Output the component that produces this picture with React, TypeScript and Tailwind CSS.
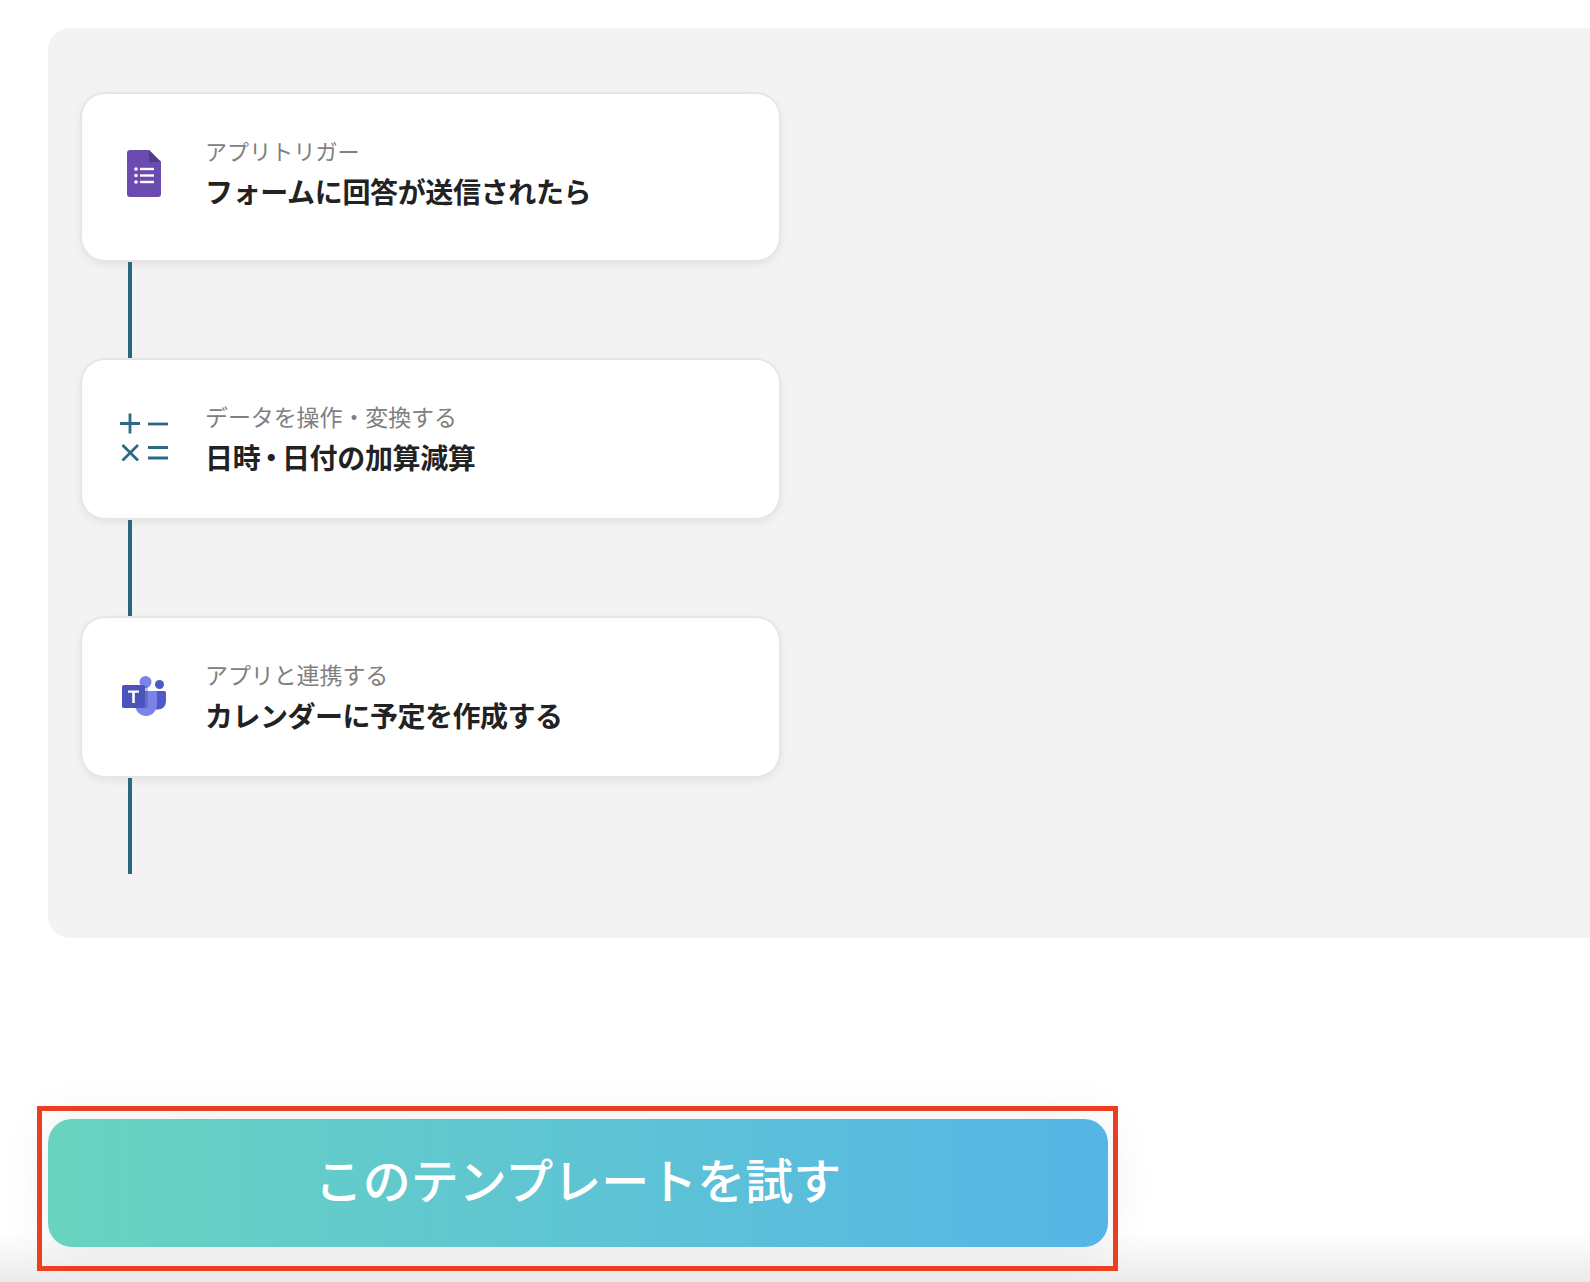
import React from 'react';

const FONT = "font-['Noto_Sans_CJK_JP','Noto_Sans',sans-serif]";

function FormsIcon() {
  return (
    <svg width="34" height="47" viewBox="0 0 34 47" aria-hidden="true">
      <path d="M3 0h19l12 12v32a3 3 0 0 1-3 3H3a3 3 0 0 1-3-3V3a3 3 0 0 1 3-3z" fill="#6c4bb0" />
      <path d="M22 0l12 12H22z" fill="#523a8f" />
      <circle cx="9" cy="19" r="1.8" fill="#fff" />
      <circle cx="9" cy="25.5" r="1.8" fill="#fff" />
      <circle cx="9" cy="32" r="1.8" fill="#fff" />
      <rect x="13" y="17.8" width="14" height="2.4" fill="#fff" />
      <rect x="13" y="24.3" width="14" height="2.4" fill="#fff" />
      <rect x="13" y="30.8" width="14" height="2.4" fill="#fff" />
    </svg>
  );
}

function MathIcon() {
  return (
    <svg width="48" height="48" viewBox="0 0 48 48" fill="none" stroke="#2b6a85" strokeWidth="2.8" className="-mt-[4px]" aria-hidden="true">
      <path d="M0 10.5h20M10 0.5v20" />
      <path d="M28 11h20" />
      <path d="M2.5 32l15.500 15.500M18 32L2.500 47.500" />
      <path d="M28 34.500h20M28 45h20" />
    </svg>
  );
}

function TeamsIcon() {
  return (
    <svg width="44" height="40" viewBox="0 0 44 40" className="-mt-[2px]" aria-hidden="true">
      <circle cx="37.500" cy="8.500" r="4.500" fill="#5059c9" />
      <path d="M30 15h12.500a1.500 1.500 0 0 1 1.500 1.500v9a8 8 0 0 1-8 8h-6z" fill="#5059c9" />
      <circle cx="23.500" cy="6" r="6" fill="#7b83eb" />
      <path d="M14 15h19a2 2 0 0 1 2 2v11.500a11 11 0 0 1-11 11.500 11.500 11.500 0 0 1-11-11.500V16z" fill="#7b83eb" />
      <path d="M13 10h11a2 2 0 0 1 2 2v18a2 2 0 0 1-2 2h-9z" fill="#3f4594" opacity="0.35" />
      <rect x="0" y="9" width="23" height="23" rx="1.800" fill="#4b53bc" />
      <path d="M6 14.500h11v2.200h-4.200V27h-2.600V16.700H6z" fill="#fff" />
    </svg>
  );
}

function FlowCard({ label, title, icon, className, labelClass }: { label: string; title: React.ReactNode; icon: React.ReactNode; className: string; labelClass: string }) {
  return (
    <div className={`flex w-[699px] items-center rounded-[24px] border border-[#e4e4e4] bg-white pl-[31px] shadow-[0_0_0_1px_#e8e8e8,0_3px_8px_rgba(0,0,0,0.08)] ${className}`}>
      <div className="flex w-[62px] shrink-0 justify-center">{icon}</div>
      <div className="ml-[30px] pb-[6px]">
        <div className={`leading-[41px] text-[#808080] ${labelClass}`}>{label}</div>
        <div className="text-[28px] font-bold leading-[40px] tracking-[-0.35px] text-[#222222]">{title}</div>
      </div>
    </div>
  );
}

function Connector({ className }: { className: string }) {
  return <div className={`ml-[47px] w-[4px] bg-[#2b6580] ${className}`} />;
}

export default function App() {
  return (
    <div className={`relative h-[1282px] overflow-hidden bg-white pt-[28px] ${FONT}`}>
      <div className="absolute inset-x-0 bottom-0 h-[50px] bg-gradient-to-b from-white to-[#ebebeb]" />

      {/* Flow panel */}
      <div className="relative ml-[48px] h-[910px] rounded-tl-[22px] rounded-bl-[22px] bg-[#f3f3f3] pl-[33px] pt-[65px]">
        <FlowCard
          className="h-[168px] pb-[8px]"
          labelClass="text-[22px] tracking-[0.1px]"
          label="アプリトリガー"
          title="フォームに回答が送信されたら"
          icon={<FormsIcon />}
        />
        <Connector className="mt-[1px] h-[97px]" />
        <FlowCard
          className="h-[160px]"
          labelClass="text-[23px] tracking-[-0.1px]"
          label="データを操作・変換する"
          title={<>日時<span className="-mx-[3px]">・</span>日付の加算減算</>}
          icon={<MathIcon />}
        />
        <Connector className="mt-[1px] h-[97px]" />
        <FlowCard
          className="h-[160px]"
          labelClass="text-[23px] tracking-[-0.1px]"
          label="アプリと連携する"
          title={<span className="tracking-[-0.5px]">カレンダーに予定を作成する</span>}
          icon={<TeamsIcon />}
        />
        <Connector className="mt-[1px] h-[96px]" />
      </div>

      {/* CTA */}
      <div className="relative ml-[37px] mt-[168px] h-[165px] w-[1081px] border-[5px] border-[#ee4023] pl-[6px] pt-[8px]">
        <button className="flex h-[128px] w-[1060px] items-center justify-center rounded-[24px] bg-gradient-to-r from-[#69d3bf] to-[#55b5e6] pb-[10px] text-[48px] font-medium text-white shadow-[0_0_50px_rgba(0,0,0,0.08)]">
          このテンプレートを試す
        </button>
      </div>
    </div>
  );
}
